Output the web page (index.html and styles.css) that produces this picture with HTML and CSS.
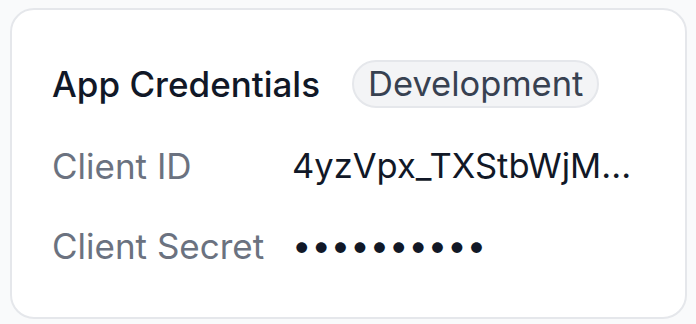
FILE: index.html
```html
<!DOCTYPE html>
<html lang="en">
<head>
  <meta charset="UTF-8">
  <meta name="viewport" content="width=device-width, initial-scale=1.0">
  <title>App Credentials</title>
  <link rel="stylesheet" href="styles.css">
</head>
<body>
  <div class="card">
    <div class="card-header">
      <h2>App Credentials</h2>
      <span class="badge">Development</span>
    </div>

    <div class="cred-list">
      <div class="cred-row">
        <span class="label">Client ID</span>
        <span class="value">4yzVpx_TXStbWjM...</span>
      </div>
      <div class="cred-row">
        <span class="label">Client Secret</span>
        <span class="value secret">••••••••••</span>
      </div>
    </div>
  </div>
</body>
</html>
```

FILE: styles.css
```css
:root {
  --fundo: #f9fafb;
  --borda: #e5e7eb;
  --texto: #111827;
  --cinza: #6b7280;
  --badge-fundo: #f3f4f6;
  --badge-texto: #374151;
}

body {
  font-family: 'Inter', 'Noto Sans', sans-serif;
  margin: 0;
  padding: 8px 9px 5px 10px;
  background: var(--fundo);
  color: var(--texto);
}

.card {
  background: #fff;
  border: 2px solid var(--borda);
  border-radius: 24px;
  padding: 50px 40px 46px;
  height: 311px;
  box-sizing: border-box;
}

.card-header {
  display: flex;
  align-items: center;
  gap: 32px;
  margin-bottom: 34px;
}

.card-header h2 {
  margin: 0;
  font-size: 35px;
  font-weight: 500;
  line-height: 48px;
}

.badge {
  background: var(--badge-fundo);
  border: 2px solid var(--borda);
  border-radius: 999px;
  padding: 0 14px;
  font-size: 34.5px;
  line-height: 44px;
  color: var(--badge-texto);
}

.cred-list {
  display: flex;
  flex-direction: column;
  gap: 32px;
}

.cred-row {
  display: grid;
  grid-template-columns: 240px 1fr;
  font-size: 35px;
  line-height: 48px;
}

.label {
  color: var(--cinza);
}

.value {
  color: var(--texto);
  font-size: 34.5px;
}
```
